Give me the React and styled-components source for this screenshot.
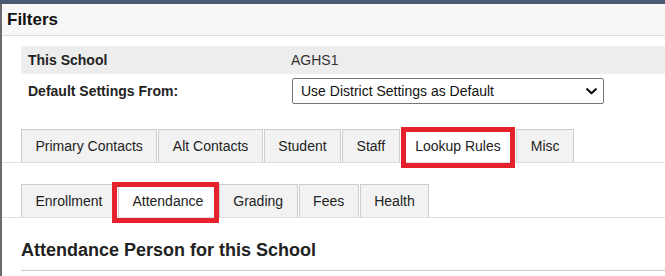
import styled, { createGlobalStyle } from 'styled-components';

const GlobalStyle = createGlobalStyle`
    html, body {
        margin: 0;
        padding: 0;
        background: #ffffff;
        font-family: "Liberation Sans", Arial, sans-serif;
        color: #222;
    }
`;

const primaryTabs = [
    { label: 'Primary Contacts' },
    { label: 'Alt Contacts' },
    { label: 'Student' },
    { label: 'Staff' },
    { label: 'Lookup Rules', active: true, mark: { left: -1, right: -1 } },
    { label: 'Misc' },
];

const lookupTabs = [
    { label: 'Enrollment' },
    { label: 'Attendance', active: true, mark: { left: -7, right: -2 } },
    { label: 'Grading' },
    { label: 'Fees' },
    { label: 'Health' },
];

const ChevronDown = () => (
    <svg width='11' height='7' viewBox='0 0 11 7' aria-hidden='true'>
        <path d='M1.2 1.2 L5.5 5.3 L9.8 1.2' fill='none' stroke='#111' strokeWidth='2.2' strokeLinecap='round' strokeLinejoin='round' />
    </svg>
);

const App = () => {
    return (
        <Page>
            <GlobalStyle />
            <Panel>
                <PanelHeader>Filters</PanelHeader>
                <PanelBody>
                    <InfoTable>
                        <InfoRow $shaded>
                            <Label>This School</Label>
                            <Value>AGHS1</Value>
                        </InfoRow>
                        <InfoRow $tall>
                            <Label>Default Settings From:</Label>
                            <Value>
                                <SelectBox role='combobox'>
                                    <span>Use District Settings as Default</span>
                                    <ChevronDown />
                                </SelectBox>
                            </Value>
                        </InfoRow>
                    </InfoTable>

                    <TabBar>
                        {primaryTabs.map((t) => (
                            <Tab key={t.label} $active={t.active}>
                                {t.label}
                                {t.mark && <Highlight $left={t.mark.left} $right={t.mark.right} />}
                            </Tab>
                        ))}
                    </TabBar>

                    <TabBar>
                        {lookupTabs.map((t) => (
                            <Tab key={t.label} $active={t.active}>
                                {t.label}
                                {t.mark && <Highlight $left={t.mark.left} $right={t.mark.right} />}
                            </Tab>
                        ))}
                    </TabBar>

                    <SectionTitle>Attendance Person for this School</SectionTitle>
                </PanelBody>
            </Panel>
        </Page>
    );
};

const Page = styled.div`
    border-top: 4px solid #4b5a70;
    width: 665px;
    height: 272px;
    overflow: hidden;
`;

const Panel = styled.section`
    border-left: 2px solid #6b6b6b;
    height: 100%;
`;

const PanelHeader = styled.h2`
    margin: 0;
    height: 31px;
    line-height: 31px;
    padding-left: 5px;
    background: #f7f7f7;
    border-bottom: 1px solid #dcdcdc;
    font-size: 17px;
    font-weight: bold;
    color: #111;
`;

const PanelBody = styled.div`
    padding-top: 10px;
`;

const InfoTable = styled.div`
    margin-left: 19px;
`;

const InfoRow = styled.div`
    display: grid;
    grid-template-columns: 270px 1fr;
    align-items: center;
    height: ${(p) => (p.$tall ? '34px' : '28px')};
    background: ${(p) => (p.$shaded ? '#ededed' : 'transparent')};
`;

const Label = styled.div`
    padding-left: 7px;
    font-size: 14px;
    font-weight: bold;
    color: #222;
`;

const Value = styled.div`
    font-size: 14px;
    color: #333;
`;

const SelectBox = styled.div`
    box-sizing: border-box;
    width: 312px;
    height: 26px;
    margin-left: 1px;
    padding: 0 6px 0 8px;
    display: flex;
    align-items: center;
    justify-content: space-between;
    border: 1px solid #767676;
    border-radius: 2px;
    background: #fff;
    font-size: 14px;
    color: #111;
`;

const TabBar = styled.div`
    display: flex;
    align-items: flex-end;
    gap: 1px;
    margin-top: 21px;
    padding-left: 19px;
    border-bottom: 1px solid #dddddd;
`;

const Tab = styled.div`
    position: relative;
    box-sizing: border-box;
    height: 33px;
    line-height: 32px;
    padding: 0 13.5px;
    border: 1px solid #cccccc;
    border-bottom: none;
    background: ${(p) => (p.$active ? '#ffffff' : '#f2f2f2')};
    font-size: 14px;
    color: #222;
    white-space: nowrap;
`;

const Highlight = styled.span`
    position: absolute;
    top: -3px;
    bottom: -6px;
    left: ${(p) => p.$left}px;
    right: ${(p) => p.$right}px;
    border: 5px solid #e5212b;
    pointer-events: none;
`;

const SectionTitle = styled.h3`
    margin: 22px 0 0 19px;
    padding-bottom: 9px;
    line-height: 21px;
    font-size: 18px;
    font-weight: bold;
    color: #222;
    border-bottom: 1px solid #cccccc;
`;

export default App;
